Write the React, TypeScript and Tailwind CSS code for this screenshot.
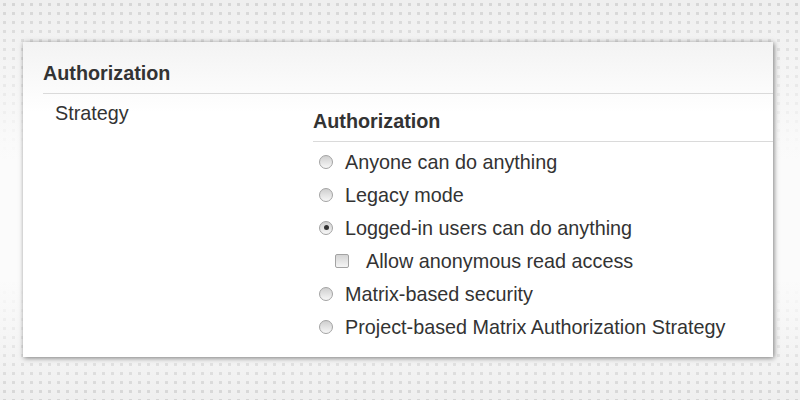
import React from 'react'

const options = [
  { label: 'Anyone can do anything', checked: false },
  { label: 'Legacy mode', checked: false },
  { label: 'Logged-in users can do anything', checked: true },
  { label: 'Matrix-based security', checked: false },
  { label: 'Project-based Matrix Authorization Strategy', checked: false },
]

function Radio({ checked }: { checked: boolean }) {
  return (
    <span className="flex h-[14px] w-[14px] shrink-0 items-center justify-center rounded-full border border-[#a3a3a3] bg-[linear-gradient(to_bottom,#cfcfcf,#f7f7f7)]">
      {checked && <span className="h-[5px] w-[5px] rounded-full bg-[#333]" />}
    </span>
  )
}

function Row({ label, checked }: { label: string; checked: boolean }) {
  return (
    <div className="flex h-[33px] items-center pl-[6px]">
      <Radio checked={checked} />
      <span className="ml-[12px]">{label}</span>
    </div>
  )
}

export default function App() {
  return (
    <div className="h-[400px] w-[800px] overflow-hidden bg-[#efefef] bg-[linear-gradient(to_bottom,transparent_0%,#fbfbfb_40%,#fbfbfb_70%,transparent_100%),radial-gradient(circle,#d5d5d5_1.4px,transparent_2px)] bg-[length:100%_100%,9px_9px] pl-[23px] pt-[42px] font-['Liberation_Sans',Arial,sans-serif] text-[19.8px] leading-[22px] text-[#333]">
      <div className="h-[315px] w-[750px] bg-[linear-gradient(to_bottom,#f3f3f3,#ffffff_70px)] shadow-[1px_1px_5px_rgba(0,0,0,0.5)]">
        <div className="ml-[20px] border-b border-[#dadada] pb-[9px] pt-[20px] font-bold">Authorization</div>

        <div className="flex">
          <div className="w-[290px] pl-[32px] pt-[8px]">Strategy</div>
          <div className="flex-1 pt-[16px]">
            <div className="border-b border-[#dadada] pb-[9px] font-bold">Authorization</div>
            <div className="pt-[3px]">
              <Row {...options[0]} />
              <Row {...options[1]} />
              <Row {...options[2]} />
              <div className="flex h-[33px] items-center pl-[22px]">
                <span className="h-[14px] w-[14px] shrink-0 rounded-[2px] border border-[#a3a3a3] bg-[linear-gradient(to_bottom,#d4d4d4,#f5f5f5)]" />
                <span className="ml-[17px]">Allow anonymous read access</span>
              </div>
              <Row {...options[3]} />
              <Row {...options[4]} />
            </div>
          </div>
        </div>
      </div>
    </div>
  )
}
